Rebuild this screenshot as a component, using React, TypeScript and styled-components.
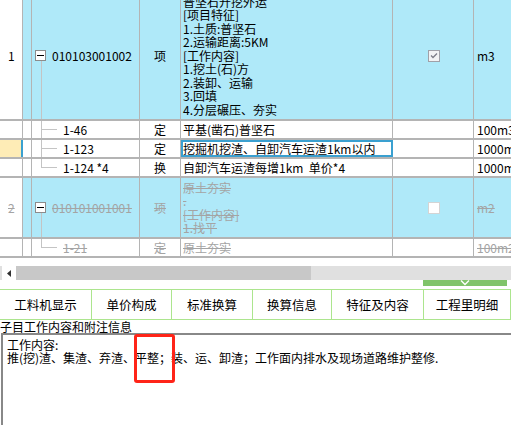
import styled, { createGlobalStyle, css } from "styled-components";

const GlobalStyle = createGlobalStyle`
  html, body {
    margin: 0;
    padding: 0;
    background: #fff;
    overflow: hidden;
  }
  body {
    font-family: "Noto Sans CJK SC", "DejaVu Sans", sans-serif;
    font-size: 12px;
    color: #000;
  }
`;

const LINE = "#b4b4b4";
const TREE = "#c4c4c4";
const BLUE = "#afe9f9";
const GREEN = "#ace58e";

type RowData = {
  no?: string;
  code: string;
  kind: string;
  name: string[];
  unit: string;
  height: number;
  parent?: boolean;
  last?: boolean;
  checked?: boolean;
  removed?: boolean;
  selected?: boolean;
};

const rows: RowData[] = [
  {
    no: "1",
    code: "010103001002",
    kind: "项",
    name: [
      "普坚石开挖外运",
      "[项目特征]",
      "1.土质:普坚石",
      "2.运输距离:5KM",
      "[工作内容]",
      "1.挖土(石)方",
      "2.装卸、运输",
      "3.回填",
      "4.分层碾压、夯实",
    ],
    unit: "m3",
    height: 129,
    parent: true,
    checked: true,
  },
  { code: "1-46", kind: "定", name: ["平基(凿石)普坚石"], unit: "100m3", height: 19 },
  {
    code: "1-123",
    kind: "定",
    name: ["挖掘机挖渣、自卸汽车运渣1km以内"],
    unit: "1000m3",
    height: 19,
    selected: true,
  },
  {
    code: "1-124 *4",
    kind: "换",
    name: ["自卸汽车运渣每增1km\u00a0\u00a0单价*4"],
    unit: "1000m3",
    height: 19,
    last: true,
  },
  {
    no: "2",
    code: "010101001001",
    kind: "项",
    name: ["原土夯实", ".", "[工作内容]", "1.找平"],
    unit: "m2",
    height: 61,
    parent: true,
    checked: false,
    removed: true,
  },
  {
    code: "1-21",
    kind: "定",
    name: ["原土夯实"],
    unit: "100m2",
    height: 19,
    last: true,
    removed: true,
  },
];

const tabs = [
  { label: "工料机显示", w: 92 },
  { label: "单价构成", w: 80 },
  { label: "标准换算", w: 81 },
  { label: "换算信息", w: 79 },
  { label: "特征及内容", w: 92 },
  { label: "工程里明细", w: 0 },
];

const Page = styled.div`
  width: 511px;
  height: 425px;
  display: flex;
  flex-direction: column;
  overflow: hidden;
`;

const Grid = styled.div`
  height: 258px;
  overflow: hidden;
  flex-shrink: 0;
`;

const GridBody = styled.div`
  margin-top: -8px;
`;

const Row = styled.div<{ $h: number; $blue: boolean }>`
  display: grid;
  grid-template-columns: 23px 9px 108px 41px 212px 81px 1fr;
  height: ${({ $h }) => $h}px;
  box-sizing: border-box;
  border-bottom: 2px solid ${LINE};
  background: ${({ $blue }) => ($blue ? BLUE : "#fff")};
`;

const Cell = styled.div<{ $muted?: boolean; $center?: boolean }>`
  box-sizing: border-box;
  border-right: 1px solid ${LINE};
  display: flex;
  align-items: center;
  justify-content: ${({ $center }) => ($center ? "center" : "flex-start")};
  overflow: hidden;
  white-space: nowrap;
  line-height: 13px;
  color: ${({ $muted }) => ($muted ? "#a4a4a4" : "#000")};
  ${({ $muted }) =>
    $muted &&
    css`
      text-decoration: line-through;
    `}
`;

const NumCell = styled(Cell)<{ $selected?: boolean }>`
  background: ${({ $selected }) => ($selected ? "#feecb6" : "#fff")};
  padding-left: 8px;
  ${({ $selected }) =>
    $selected &&
    css`
      border-right: 2px solid #3aa0d0;
    `}
`;

const TreeCell = styled(Cell)<{ $parent?: boolean }>`
  padding-left: 3px;
  ${({ $parent }) =>
    $parent &&
    css`
      background: linear-gradient(${TREE}, ${TREE}) 9px 100% / 1px 50% no-repeat;
    `}
`;

const Branch = styled.span<{ $last?: boolean }>`
  align-self: stretch;
  width: 17px;
  margin-left: 6px;
  margin-right: 5px;
  flex-shrink: 0;
  background:
    linear-gradient(${TREE}, ${TREE}) 0 0 / 1px ${({ $last }) => ($last ? "50%" : "100%")} no-repeat,
    linear-gradient(${TREE}, ${TREE}) 0 50% / 16px 1px no-repeat;
`;

const Toggle = styled.span`
  width: 11px;
  height: 11px;
  box-sizing: border-box;
  border: 1px solid #8c8c8c;
  background: #fff;
  display: flex;
  align-items: center;
  justify-content: center;
  margin-right: 6px;
  flex-shrink: 0;
  text-decoration: none;

  &::before {
    content: "";
    width: 7px;
    height: 1px;
    background: #000;
  }
`;

const NameCell = styled(Cell)<{ $selected?: boolean }>`
  padding-left: 2px;
  ${({ $selected }) =>
    $selected &&
    css`
      border: 2px solid #3aa0d0;
      padding-left: 0;
    `}
`;

const Lines = styled.div`
  display: flex;
  flex-direction: column;
  line-height: 13.5px;
`;

const Check = styled.span<{ $on: boolean }>`
  width: 12px;
  height: 12px;
  box-sizing: border-box;
  border: 1px solid ${({ $on }) => ($on ? "#a0a0a8" : "#d4d4d4")};
  background: ${({ $on }) => ($on ? "#f2f2f4" : "#fff")};
  display: flex;
  align-items: center;
  justify-content: center;
  margin-left: 2px;
`;

const UnitCell = styled(Cell)`
  border-right: none;
  padding-left: 3px;
`;

const Gap = styled.div`
  height: 8px;
  flex-shrink: 0;
`;

const ScrollBar = styled.div`
  height: 14px;
  flex-shrink: 0;
  background: #e0e0e0;
  display: flex;
`;

const ScrollBtn = styled.div`
  width: 14px;
  margin-left: 2px;
  background: #fff;
  display: flex;
  align-items: center;
  justify-content: center;
`;

const Thumb = styled.div`
  width: 295px;
  background: #c8c8c8;
`;

const Strip = styled.div`
  height: 9px;
  flex-shrink: 0;
  display: flex;
  justify-content: flex-end;
  padding-right: 4px;
`;

const Grip = styled.div`
  width: 84px;
  height: 6px;
  background: #80c46a;
  display: flex;
  justify-content: center;
`;

const TabBar = styled.div`
  height: 31px;
  flex-shrink: 0;
  box-sizing: border-box;
  border-top: 1px solid ${GREEN};
  border-bottom: 1px solid ${GREEN};
  display: flex;
`;

const Tab = styled.div<{ $w: number }>`
  ${({ $w }) =>
    $w
      ? css`
          width: ${$w}px;
        `
      : css`
          flex: 1;
        `}
  box-sizing: border-box;
  border-right: 1px solid ${GREEN};
  display: flex;
  align-items: center;
  justify-content: center;
  font-size: 12.5px;
  background: #fff;
`;

const Heading = styled.div`
  height: 13px;
  line-height: 13px;
  flex-shrink: 0;
  white-space: nowrap;
`;

const TextBox = styled.div`
  position: relative;
  flex: 1;
  margin-left: 1px;
  border-top: 2px solid #888;
  border-left: 2px solid #888;
  padding: 3px 4px;
  line-height: 13px;
  white-space: nowrap;
`;

const Mark = styled.div`
  position: absolute;
  left: 131px;
  top: -1px;
  width: 41px;
  height: 49px;
  box-sizing: border-box;
  border: 3px solid #ff2418;
  border-radius: 3px;
`;

const CheckMark = () => (
  <svg width="8" height="7" viewBox="0 0 8 7">
    <path d="M1 3.5 L3 5.5 L7 1.5" fill="none" stroke="#7c7c88" strokeWidth="1.3" />
  </svg>
);

const LeftArrow = () => (
  <svg width="4" height="7" viewBox="0 0 4 7">
    <path d="M4 0 L0 3.5 L4 7 Z" fill="#303030" />
  </svg>
);

const Chevron = () => (
  <svg width="10" height="6" viewBox="0 0 10 6">
    <path d="M1 0.5 L5 4.5 L9 0.5" fill="none" stroke="#fff" strokeWidth="1.4" />
  </svg>
);

const App = () => (
  <Page>
    <GlobalStyle />
    <Grid>
      <GridBody>
        {rows.map((r) => (
          <Row key={r.code} $h={r.height} $blue={!!r.parent}>
            <NumCell $selected={r.selected} $muted={r.removed}>
              {r.no}
            </NumCell>
            <Cell />
            <TreeCell $parent={r.parent} $muted={r.removed}>
              {r.parent ? <Toggle /> : <Branch $last={r.last} />}
              <span>{r.code}</span>
            </TreeCell>
            <Cell $center $muted={r.removed}>
              {r.kind}
            </Cell>
            <NameCell $selected={r.selected} $muted={r.removed}>
              <Lines>
                {r.name.map((line, i) => (
                  <span key={i}>{line}</span>
                ))}
              </Lines>
            </NameCell>
            <Cell $center>
              {r.parent && <Check $on={!!r.checked}>{r.checked && <CheckMark />}</Check>}
            </Cell>
            <UnitCell $muted={r.removed}>{r.unit}</UnitCell>
          </Row>
        ))}
      </GridBody>
    </Grid>
    <Gap />
    <ScrollBar>
      <ScrollBtn>
        <LeftArrow />
      </ScrollBtn>
      <Thumb />
    </ScrollBar>
    <Strip>
      <Grip>
        <Chevron />
      </Grip>
    </Strip>
    <TabBar>
      {tabs.map((t) => (
        <Tab key={t.label} $w={t.w}>
          {t.label}
        </Tab>
      ))}
    </TabBar>
    <Heading>子目工作内容和附注信息</Heading>
    <TextBox>
      <div>工作内容:</div>
      <div>推(挖)渣、集渣、弃渣、平整；装、运、卸渣；工作面内排水及现场道路维护整修.</div>
      <Mark />
    </TextBox>
  </Page>
);

export default App;
